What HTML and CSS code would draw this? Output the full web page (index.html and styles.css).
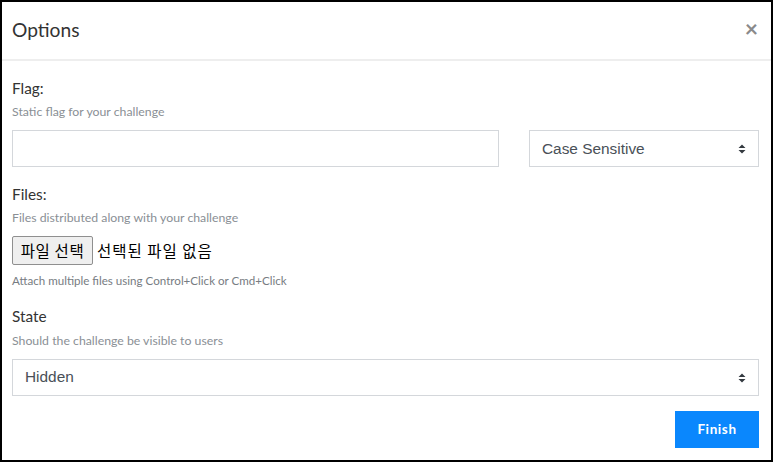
FILE: index.html
```html
<!DOCTYPE html>
<html lang="en">
<head>
<meta charset="utf-8">
<title>Options</title>
<link rel="stylesheet" href="styles.css">
</head>
<body>
<div class="modal">
  <div class="modal-header">
    <h5 class="modal-title">Options</h5>
    <span class="close">×</span>
  </div>
  <div class="modal-body">
    <div class="form-group">
      <label class="label">Flag:</label>
      <small class="hint">Static flag for your challenge</small>
      <div class="flag-row">
        <div class="input"></div>
        <div class="select"><span>Case Sensitive</span>
          <svg class="arrows" width="8" height="10" viewBox="0 0 8 10"><path d="M4 0.5 L7.5 4 L0.5 4 Z M0.5 6 L7.5 6 L4 9.5 Z" fill="#343a40"/></svg>
        </div>
      </div>
    </div>
    <div class="form-group">
      <label class="label">Files:</label>
      <small class="hint">Files distributed along with your challenge</small>
      <div class="file-row">
        <span class="file-btn">파일 선택</span>
        <span class="file-none">선택된 파일 없음</span>
      </div>
      <small class="attach">Attach multiple files using Control+Click or Cmd+Click</small>
    </div>
    <div class="form-group form-group-last">
      <label class="label">State</label>
      <small class="hint hint-state">Should the challenge be visible to users</small>
      <div class="select select-wide"><span>Hidden</span>
        <svg class="arrows" width="8" height="10" viewBox="0 0 8 10"><path d="M4 0.5 L7.5 4 L0.5 4 Z M0.5 6 L7.5 6 L4 9.5 Z" fill="#343a40"/></svg>
      </div>
    </div>
    <div class="footer">
      <span class="finish">Finish</span>
    </div>
  </div>
</div>
</body>
</html>
```
FILE: styles.css
```css
* { box-sizing: border-box; }
html, body { margin: 0; padding: 0; }
body {
  width: 773px;
  height: 462px;
  font-family: Lato, "Noto Sans", sans-serif;
  color: #333;
  background: #fff;
}
.modal {
  width: 773px;
  height: 462px;
  border: 2px solid #000;
  display: flex;
  flex-direction: column;
}
.modal-header {
  height: 59px;
  border-bottom: 2px solid #eeeeee;
  display: flex;
  align-items: center;
  justify-content: space-between;
  padding: 0 13px 0 10px;
}
.modal-title {
  margin: 0;
  font-size: 19.2px;
  font-weight: 400;
  color: #333;
  line-height: 1.2;
  padding-bottom: 2px;
}
.close {
  font-size: 23px;
  font-weight: 700;
  color: #8a8a8a;
  line-height: 1;
  padding-bottom: 5px;
}
.modal-body {
  padding: 16px 12px 0 10px;
}
.form-group {
  margin-bottom: 16px;
  display: flex;
  flex-direction: column;
}
.form-group-last { margin-bottom: 15px; }
.label {
  font-size: 15.36px;
  line-height: 23px;
  color: #333;
}
.hint {
  font-size: 12.29px;
  line-height: 18.4px;
  color: #8a8f95;
  margin-top: 3px;
}
.hint-state { margin-top: 4px; }
.flag-row {
  display: grid;
  grid-template-columns: 1fr 230px;
  gap: 30px;
  margin-top: 9px;
}
.input {
  height: 37px;
  border: 1px solid #d4d7db;
  background: #fff;
}
.select {
  height: 37px;
  border: 1px solid #d4d7db;
  background: #fff;
  display: flex;
  align-items: center;
  justify-content: space-between;
  padding: 0 12px 0 12px;
  font-family: "Liberation Sans", Arial, sans-serif;
  font-size: 15.4px;
  color: #495057;
}
.select-wide { margin-top: 8px; }
.arrows { display: block; margin-top: 1px; }
.file-row {
  display: flex;
  align-items: center;
  margin-top: 8px;
  font-family: "Noto Sans CJK KR", sans-serif;
  font-size: 15.5px;
  color: #000;
}
.file-btn {
  height: 29px;
  width: 81px;
  display: flex;
  align-items: center;
  justify-content: center;
  background: #efefef;
  border: 1px solid #8f8f8f;
  border-radius: 2px;
  color: #000;
  letter-spacing: 0.6px;
}
.file-none { margin-left: 4px; letter-spacing: 1px; }
.attach {
  font-size: 11.6px;
  line-height: 16.5px;
  color: #777c82;
  margin-top: 8px;
}
.footer {
  display: flex;
  justify-content: flex-end;
  padding-top: 0;
}
.finish {
  width: 84px;
  height: 37px;
  background: #0a87fd;
  color: #fff;
  font-weight: 700;
  font-size: 13.5px;
  letter-spacing: 0.6px;
  display: flex;
  align-items: center;
  justify-content: center;
}
```
